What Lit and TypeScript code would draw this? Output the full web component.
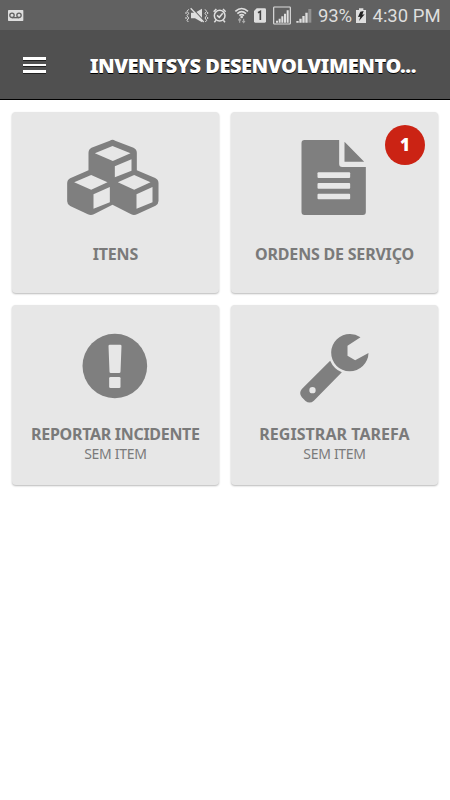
import { LitElement, html, css, svg, TemplateResult } from "lit";
import { customElement, property } from "lit/decorators.js";

const cubes = svg`
  <path fill="#7f7f7f" d="M181 47Q189 42 197 47L252 68Q262 73 262 83V136L317 159Q327 164 327 174V228Q327 237 318 242L264 267Q254 272 245 268L189 239L133 268Q124 272 115 268L62 243Q53 238 53 229V175Q53 165 62 160L117 136V83Q117 73 126 68Z"/>
  <path fill="#e7e7e7" d="M136 85L189 63L243 85L190 108ZM196 124L246 103V137L196 157ZM74 172L125 150L174 172L125 194ZM132 208L181 186V232L132 251ZM205 172L254 150L303 172L254 194ZM261 208L309 186V232L261 251Z"/>`;

const sheet = svg`
  <path fill="#7f7f7f" d="M240 105H344V177Q344 186 353 186H424V321Q424 330 415 330H240Q231 330 231 321V114Q231 105 240 105ZM360 110L419 170H360Z"/>
  <g fill="#e7e7e7"><rect x="279" y="202" width="98" height="17" rx="3"/><rect x="279" y="234" width="98" height="17" rx="3"/><rect x="279" y="266" width="98" height="17" rx="3"/></g>`;

const alertSign = svg`
  <circle cx="346" cy="198" r="97" fill="#7f7f7f"/>
  <path fill="#e7e7e7" d="M331 134H362Q366 134 366 138L363 215Q363 219 359 219H334Q330 219 330 215L327 138Q327 134 331 134Z"/>
  <rect x="329" y="231" width="34" height="33" rx="4" fill="#e7e7e7"/>`;

const wrench = svg`
  <path fill="#7f7f7f" d="M408 112Q393 102 377 102A56 56 0 1 0 432 159L392 181L369 167V137Z"/>
  <path fill="#7f7f7f" fill-rule="evenodd" d="M317 182Q328 207 352 217L268 302Q256 313 243 303L232 292Q222 279 232 267ZM264 261A9.500 9.500 0 1 0 264 280A9.500 9.500 0 1 0 264 261Z"/>`;

@customElement("status-bar")
class StatusBar extends LitElement {
  static styles = css`
    :host { display: flex; align-items: center; height: 30px; background: #616161; color: #dedede; font: 18.5px/30px Roboto, sans-serif; }
    svg { display: block; flex: none; height: 30px; }
    .voicemail { width: 16px; margin-left: 8px; margin-right: 160px; }
    .mute { width: 26px; }
    .alarm { width: 20px; }
    .wifi { width: 21px; }
    .sim { width: 19px; }
    .boxed { width: 23.33px; }
    .signal { width: 20.67px; }
    .percent { width: 37px; padding-left: 4px; letter-spacing: -0.2px; padding-top: 2px; box-sizing: border-box; }
    .battery { width: 18px; }
    .time { padding-left: 3.500px; padding-top: 2px; white-space: nowrap; }
  `;
  render() {
    return html`
      <svg class="voicemail" viewBox="24 0 48 90"><rect x="24" y="30" width="46" height="33" rx="2" fill="#dedede"/><g fill="none" stroke="#616161" stroke-width="4"><circle cx="36" cy="46" r="6.500"/><circle cx="57" cy="46" r="6.500"/><path d="M36 53H57"/></g></svg>
      <svg class="mute" viewBox="12 0 78 90"><path fill="#dedede" d="M33 38H45L66 26V67L45 55H33Z"/><path d="M34 22L72 63" stroke="#616161" stroke-width="4"/><path d="M32 25L71 66" stroke="#dedede" stroke-width="4"/><path d="M26 28L21 34L26 40L21 47L26 54L21 61L25 66M18 36V42M18 51V57M75 28L80 34L75 40L80 47L75 54L80 61L76 66M83 36V42M83 51V57" fill="none" stroke="#dedede" stroke-width="3"/></svg>
      <svg class="alarm" viewBox="90 0 60 90"><g fill="none" stroke="#dedede" stroke-width="4.500"><circle cx="119" cy="47" r="16"/><path d="M111 46L118 52L128 40M101 35L109 27M137 35L129 27M108 61L103 67M130 61L135 67"/></g></svg>
      <svg class="wifi" viewBox="150 0 63 90"><g fill="none" stroke="#dedede" stroke-width="5"><path d="M166 34Q185 17 204 34M172 41Q185 29 198 41M178 47Q185 41 192 47"/></g><circle cx="185" cy="51" r="4" fill="#dedede"/><path d="M179 68V57M175 61L179 56L183 61M191 56V66M187 63L191 68L195 63" stroke="#aaa" fill="none" stroke-width="3.500"/></svg>
      <svg class="sim" viewBox="213 0 57 90"><path fill="#dedede" d="M230 25H254Q258 25 258 29V64Q258 68 254 68H226Q222 68 222 64V33Z"/><path d="M234 38L241 34V60" fill="none" stroke="#444" stroke-width="5"/></svg>
      <svg class="boxed" viewBox="270 0 70 90"><rect x="281" y="21" width="50" height="51" rx="2" fill="none" stroke="#dedede" stroke-width="3.500"/><path fill="#dedede" d="M288 62H294V68H288ZM296 56H302V68H296ZM304 49H310V68H304ZM312 41H318V68H312ZM320 31H326V68H320Z"/></svg>
      <svg class="signal" viewBox="340 0 62 90"><path fill="#dedede" d="M350 63H357V68H350ZM359 56H366V68H359ZM368 48H375V68H368ZM377 38H384V68H377Z"/><path fill="#919191" d="M386 27H395V68H386Z"/></svg>
      <span class="percent">93%</span>
      <svg class="battery" viewBox="123 0 54 90"><path fill="#dedede" d="M147 25H160V30H168V69H138V30H147Z"/><path fill="#222" d="M151 35L161 33L157 44L164 43L147 63L151 50L144 51Z"/></svg>
      <span class="time">4:30 PM</span>`;
  }
}

@customElement("action-card")
class ActionCard extends LitElement {
  @property() label = "";
  @property() note = "";
  @property() badge = "";
  @property() box = "";
  @property({ attribute: false }) icon: TemplateResult | null = null;
  @property({ type: Number }) spacing = 0;
  static styles = css`
    :host { position: relative; display: flex; flex-direction: column; align-items: center; box-sizing: border-box; padding-top: 26px; border-radius: 4px; background: #e7e7e7; color: #7a7a7a; box-shadow: 0 1px 2px rgba(0, 0, 0, 0.28); font-family: "Noto Sans", sans-serif; text-align: center; white-space: nowrap; }
    .icon { display: block; width: 108px; height: 80px; flex: none; }
    .label { margin-top: 27px; font-size: 16px; line-height: 19px; font-weight: 700; }
    .noted { margin-top: 14.500px; }
    .note { font-size: 14px; line-height: 19px; letter-spacing: -0.3px; }
    .badge { position: absolute; right: 13.500px; top: 13px; width: 40px; height: 40px; border-radius: 50%; background: #cb2314; color: #fff; font-size: 17px; line-height: 40px; font-weight: 900; }
  `;
  render() {
    return html`
      <svg class="icon" viewBox=${this.box}>${this.icon}</svg>
      <div class="label ${this.note ? "noted" : ""}" style="letter-spacing:${this.spacing}px">${this.label}</div>
      ${this.note ? html`<div class="note">${this.note}</div>` : null}
      ${this.badge ? html`<div class="badge">${this.badge}</div>` : null}`;
  }
}

@customElement("app-root")
class AppRoot extends LitElement {
  static styles = css`
    :host { display: block; height: 800px; overflow: hidden; background: #fff; }
    header { display: flex; align-items: center; height: 70px; box-sizing: border-box; border-bottom: 1.500px solid #000; background: #505050; }
    .menu { display: flex; flex-direction: column; gap: 4px; margin: 1px 0 0 23.400px; width: 23px; }
    .line { height: 2.400px; background: #fff; box-shadow: 0 1px 0 #222; }
    .title { margin: 2px 0 0 43.300px; color: #fff; font: 900 20px/28px "Noto Sans", sans-serif; letter-spacing: -0.480px; text-shadow: 0 1px 0 #000; white-space: nowrap; }
    main { display: grid; grid-template-columns: 207.800px 207.800px; grid-auto-rows: 180.500px; gap: 12.300px 11.300px; padding: 12px 11.500px; }
  `;
  render() {
    return html`
      <status-bar></status-bar>
      <header>
        <div class="menu"><div class="line"></div><div class="line"></div><div class="line"></div></div>
        <div class="title">INVENTSYS DESENVOLVIMENTO...</div>
      </header>
      <main>
        <action-card label="ITENS" box="34.5 39 324 240" .icon=${cubes} .spacing=${-0.2}></action-card>
        <action-card label="ORDENS DE SERVIÇO" badge="1" box="166.5 99 324 240" .icon=${sheet} .spacing=${-0.2}></action-card>
        <action-card label="REPORTAR INCIDENTE" note="SEM ITEM" box="184.5 93 324 240" .icon=${alertSign} .spacing=${-0.3}></action-card>
        <action-card label="REGISTRAR TAREFA" note="SEM ITEM" box="166.5 93 324 240" .icon=${wrench} .spacing=${0.05}></action-card>
      </main>`;
  }
}
